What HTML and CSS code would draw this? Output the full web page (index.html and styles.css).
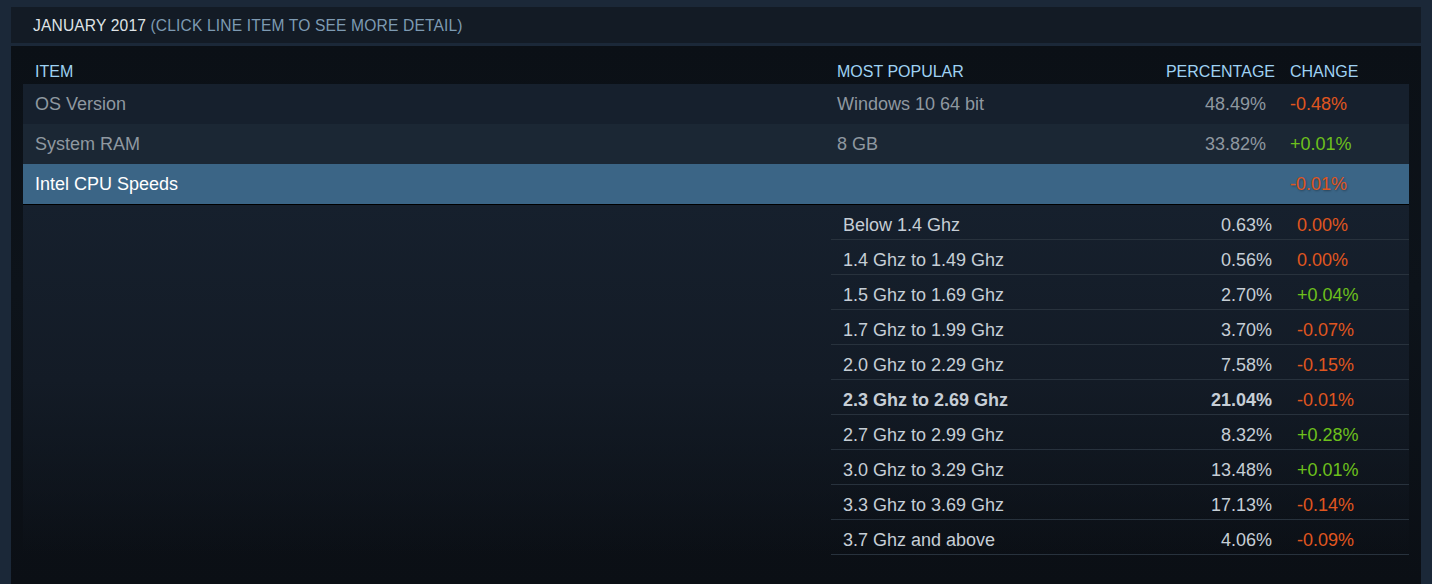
FILE: index.html
```html
<!DOCTYPE html>
<html>
<head>
<meta charset="utf-8">
<link rel="stylesheet" href="styles.css">
</head>
<body>
<div class="panel">
  <div class="panel-head">JANUARY 2017 <span class="hint">(CLICK LINE ITEM TO SEE MORE DETAIL)</span></div>
  <div class="panel-body">
    <div class="row head">
      <div class="c-item">ITEM</div>
      <div class="c-pop">MOST POPULAR</div>
      <div class="c-pct">PERCENTAGE</div>
      <div class="c-chg">CHANGE</div>
    </div>
    <div class="row odd">
      <div class="c-item">OS Version</div>
      <div class="c-pop">Windows 10 64 bit</div>
      <div class="c-pct">48.49%</div>
      <div class="c-chg neg">-0.48%</div>
    </div>
    <div class="row even">
      <div class="c-item">System RAM</div>
      <div class="c-pop">8 GB</div>
      <div class="c-pct">33.82%</div>
      <div class="c-chg pos">+0.01%</div>
    </div>
    <div class="row selected">
      <div class="c-item">Intel CPU Speeds</div>
      <div class="c-pop"></div>
      <div class="c-pct"></div>
      <div class="c-chg neg">-0.01%</div>
    </div>
    <div class="detail">
      <div class="detail-table">
        <div class="drow"><div class="d-label">Below 1.4 Ghz</div><div class="d-pct">0.63%</div><div class="d-chg neg">0.00%</div></div>
        <div class="drow"><div class="d-label">1.4 Ghz to 1.49 Ghz</div><div class="d-pct">0.56%</div><div class="d-chg neg">0.00%</div></div>
        <div class="drow"><div class="d-label">1.5 Ghz to 1.69 Ghz</div><div class="d-pct">2.70%</div><div class="d-chg pos">+0.04%</div></div>
        <div class="drow"><div class="d-label">1.7 Ghz to 1.99 Ghz</div><div class="d-pct">3.70%</div><div class="d-chg neg">-0.07%</div></div>
        <div class="drow"><div class="d-label">2.0 Ghz to 2.29 Ghz</div><div class="d-pct">7.58%</div><div class="d-chg neg">-0.15%</div></div>
        <div class="drow top"><div class="d-label">2.3 Ghz to 2.69 Ghz</div><div class="d-pct">21.04%</div><div class="d-chg neg">-0.01%</div></div>
        <div class="drow"><div class="d-label">2.7 Ghz to 2.99 Ghz</div><div class="d-pct">8.32%</div><div class="d-chg pos">+0.28%</div></div>
        <div class="drow"><div class="d-label">3.0 Ghz to 3.29 Ghz</div><div class="d-pct">13.48%</div><div class="d-chg pos">+0.01%</div></div>
        <div class="drow"><div class="d-label">3.3 Ghz to 3.69 Ghz</div><div class="d-pct">17.13%</div><div class="d-chg neg">-0.14%</div></div>
        <div class="drow"><div class="d-label">3.7 Ghz and above</div><div class="d-pct">4.06%</div><div class="d-chg neg">-0.09%</div></div>
      </div>
    </div>
  </div>
</div>
</body>
</html>
```

FILE: styles.css
```css
html, body {
  margin: 0;
  padding: 0;
  background: #1b2838;
  font-family: "Liberation Sans", Arial, sans-serif;
  height: 584px;
  overflow: hidden;
}

.panel {
  margin: 7px 11px 0 11px;
  display: flex;
  flex-direction: column;
  gap: 3px;
}

.panel-head {
  height: 36px;
  box-sizing: border-box;
  background: #131b25;
  color: #dfe3e6;
  font-size: 15.6px;
  line-height: 34px;
  padding: 2px 0 0 22px;
  letter-spacing: 0.15px;
}

.panel-head .hint {
  color: #7d9ab2;
}

.panel-body {
  background: linear-gradient(to bottom, #0b1016 0%, #0d131a 45%, #0b0f15 100%);
  padding: 14px 12px 0 12px;
  height: 540px;
  box-sizing: border-box;
}

.row {
  display: grid;
  grid-template-columns: 802px 1fr 141px 119px;
  height: 40px;
  align-items: center;
  font-size: 18px;
  color: #8f98a0;
}

.row .c-item { padding-left: 12px; }
.row .c-pop { padding-left: 12px; }
.row .c-pct { text-align: right; padding-right: 24px; }
.row.odd > div, .row.even > div, .row.selected > div { padding-top: 1px; }

.row.head {
  height: 24px;
  color: #9fd2f3;
  font-size: 16px;
}

.row.head .c-pct { padding-right: 15px; }

.row.odd { background: #16202d; }
.row.even { background: #1b2734; }
.row.selected {
  background: #3b6586;
  color: #ffffff;
  border-bottom: 1px solid #000000;
}

.neg { color: #e0561f; }
.pos { color: #6dc01c; }

.row.selected .neg { text-shadow: 1px 1px 2px rgba(0,0,0,0.35); }

.detail {
  background: linear-gradient(to bottom, #16202d 0%, #131b26 50%, rgba(19,27,38,0) 100%);
  display: flex;
  justify-content: flex-end;
}

.detail-table {
  width: 578px;
}

.drow {
  display: grid;
  grid-template-columns: 1fr 137px 112px;
  height: 35px;
  box-sizing: border-box;
  border-bottom: 1px solid #28323d;
  font-size: 18px;
  color: #c6ced6;
  line-height: 24px;
  padding-top: 8px;
}

.drow .d-label { padding-left: 12px; }
.drow .d-pct { text-align: right; padding-right: 25px; }

.drow.top .d-label,
.drow.top .d-pct { font-weight: bold; }
```
